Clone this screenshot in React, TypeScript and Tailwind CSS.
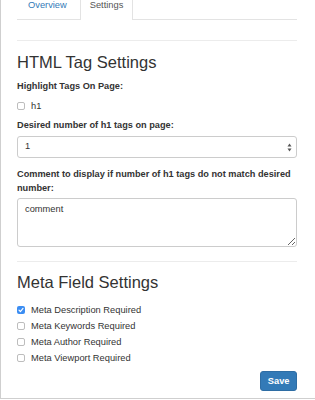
import React from "react";

const font = { fontFamily: '"Liberation Sans", Arial, sans-serif' };

function Box({ checked }: { checked?: boolean }) {
  if (checked) {
    return (
      <span className="w-[8px] h-[8px] rounded-[2px] bg-[#3b8df2] flex items-center justify-center shrink-0">
        <svg width="6" height="6" viewBox="0 0 6 6">
          <path d="M1 3.2 L2.4 4.6 L5 1.4" stroke="#fff" strokeWidth="1.2" fill="none" strokeLinecap="round" strokeLinejoin="round" />
        </svg>
      </span>
    );
  }
  return <span className="w-[8px] h-[8px] rounded-[2px] border border-[#bdbdbd] bg-white shrink-0" />;
}

function CheckRow({ label, checked, className }: { label: string; checked?: boolean; className?: string }) {
  return (
    <div className={`flex items-center gap-[6px] h-[16px] ${className ?? ""}`}>
      <Box checked={checked} />
      <span className="text-[9.3px] leading-[12px] text-[#333]">{label}</span>
    </div>
  );
}

export default function App() {
  return (
    <div className="w-[315px] h-[400px] bg-white overflow-hidden" style={font}>
      <div className="h-[399px] border-l border-b border-[#cfcfcf] pl-[16px] pr-[18px] flex flex-col">
        <div className="flex h-[20px] border-b border-[#e3e3e3]">
          <div className="px-[11px] mr-[2px] text-[9.3px] leading-[10px] text-[#337ab7]">Overview</div>
          <div className="h-[20px] px-[9px] border-l border-r border-[#e3e3e3] bg-white text-[9.3px] leading-[10px] text-[#555]">
            Settings
          </div>
        </div>
        <div className="mt-[20px] border-t border-[#ececec]" />
        <div className="mt-[12px] text-[16.5px] leading-[18px] text-[#333]">HTML Tag Settings</div>
        <div className="mt-[9px] text-[9.2px] leading-[12px] font-bold text-[#333]">Highlight Tags On Page:</div>
        <CheckRow label="h1" className="mt-[6px]" />
        <div className="mt-[5px] text-[9.2px] leading-[12px] font-bold text-[#333]">Desired number of h1 tags on page:</div>
        <div className="mt-[5px] h-[22px] border border-[#cccccc] rounded-[3px] flex items-center justify-between pl-[7px] pr-[4px]">
          <span className="text-[9.3px] text-[#333]">1</span>
          <svg width="5" height="9" viewBox="0 0 5 9">
            <path d="M2.5 0.5 L4.5 3.5 L0.5 3.5 Z" fill="#555" />
            <path d="M2.5 8.5 L4.5 5.5 L0.5 5.5 Z" fill="#555" />
          </svg>
        </div>
        <div className="mt-[9px] text-[9.2px] leading-[14px] font-bold text-[#333]">
          Comment to display if number of h1 tags do not match desired number:
        </div>
        <textarea
          className="mt-[3px] h-[49px] border border-[#cccccc] rounded-[3px] pl-[7px] pt-[4px] text-[9.3px] leading-[12px] text-[#333] resize-y outline-none"
          style={font}
          defaultValue="comment"
        />
        <div className="mt-[14px] border-t border-[#ececec]" />
        <div className="mt-[11px] text-[16.5px] leading-[18px] text-[#333]">Meta Field Settings</div>
        <div className="mt-[11px] flex flex-col">
          <CheckRow label="Meta Description Required" checked className="h-[16.5px]" />
          <CheckRow label="Meta Keywords Required" className="h-[16.5px]" />
          <CheckRow label="Meta Author Required" className="h-[16.5px]" />
          <CheckRow label="Meta Viewport Required" className="h-[16.5px]" />
        </div>
        <div className="mt-[5px] flex justify-end">
          <button className="h-[20px] px-[6.5px] rounded-[3px] bg-[#337ab7] border border-[#2e6da4] text-white text-[9.3px] font-bold leading-[12px]">
            Save
          </button>
        </div>
      </div>
    </div>
  );
}
